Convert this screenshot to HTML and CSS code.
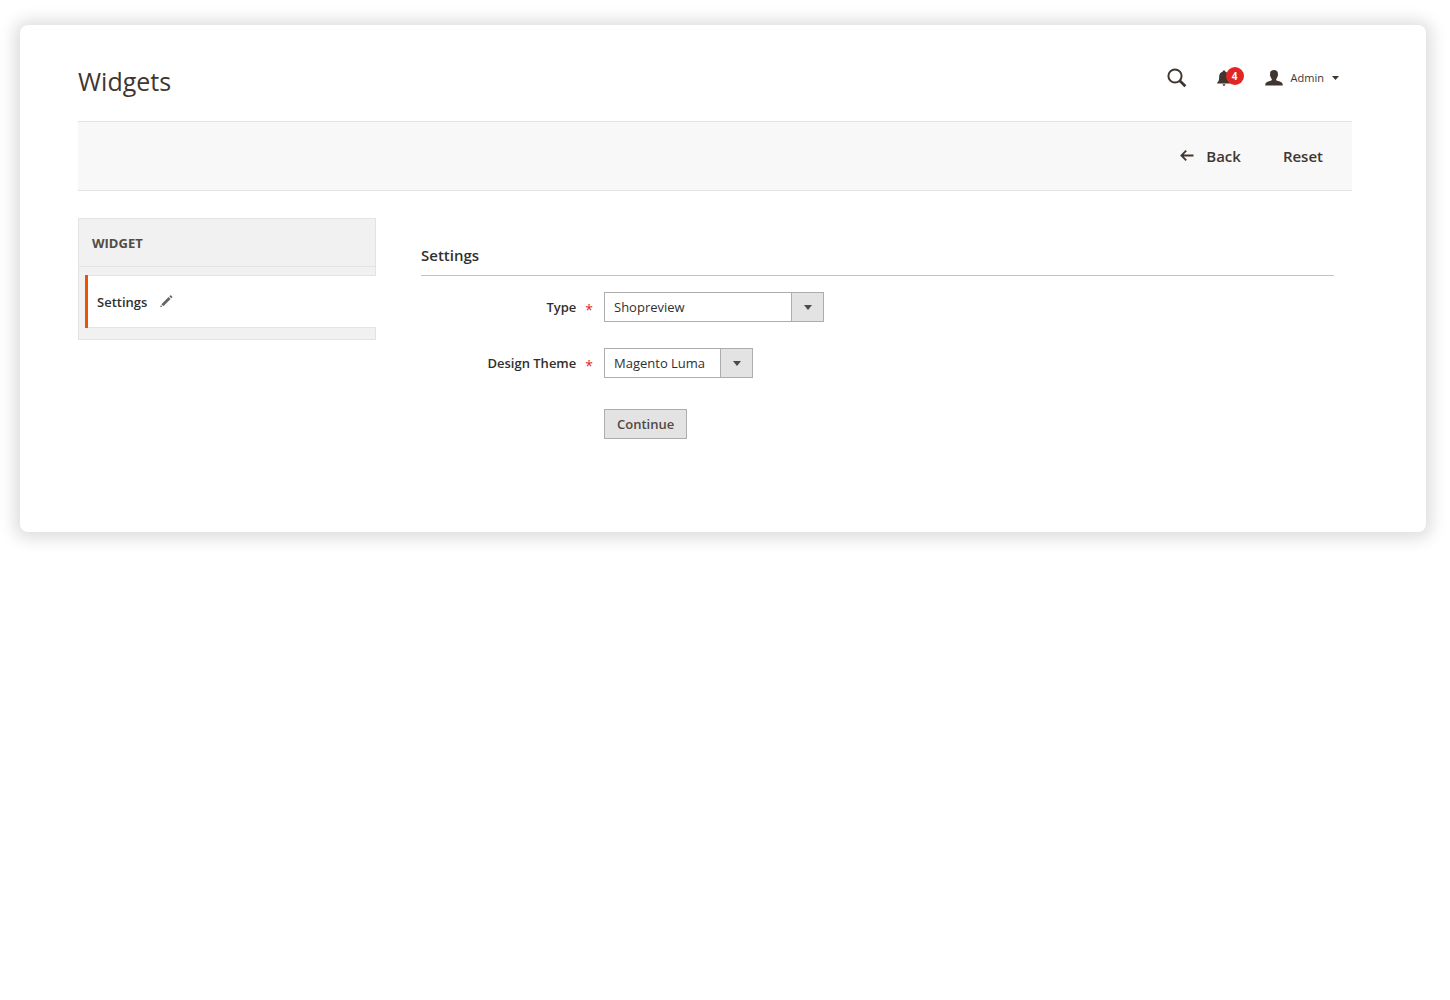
FILE: index.html
```html
<!DOCTYPE html>
<html lang="en">
<head>
    <meta charset="UTF-8">
    <meta name="viewport" content="width=device-width, initial-scale=1.0">
    <title>Widgets</title>
    <link rel="stylesheet" href="styles.css">
</head>
<body>
    <div class="page">
        <header class="header">
            <h1>Widgets</h1>
            <div class="headerTools">
                <button type="button" class="iconButton search" aria-label="Search">
                    <svg width="20" height="20" viewBox="0 0 20 20" fill="none" stroke="currentColor">
                        <circle cx="8" cy="8" r="6.6" stroke-width="2"/>
                        <path d="M12.8 12.8L18.4 18.2" stroke-width="2.8"/>
                    </svg>
                </button>
                <button type="button" class="iconButton notifications" aria-label="Notifications">
                    <svg width="14" height="16" viewBox="0 0 14 16" fill="currentColor">
                        <path d="M7 0.6C7.8 0.6 8.4 1 8.4 1.7C10.9 2.4 11.8 4.2 11.8 6.4C11.8 9.8 12.4 11.6 13.8 12.6V13.6H0.2V12.6C1.6 11.6 2.2 9.8 2.2 6.4C2.2 4.2 3.1 2.4 5.6 1.7C5.6 1 6.2 0.6 7 0.6ZM5.6 14.2H8.4C8.3 15.2 7.8 15.7 7 15.7C6.2 15.7 5.7 15.2 5.6 14.2Z"/>
                    </svg>
                    <span class="badge">4</span>
                </button>
                <button type="button" class="iconButton account">
                    <svg width="18" height="16" viewBox="0 0 18 16" fill="currentColor">
                        <path d="M9 0C11.6 0 13 1.4 12.9 3.8L12.8 4.4C13.4 4.6 13.1 6 12.5 6.4C12.3 7.6 11.8 8.4 11.2 8.9V10C11.5 10.6 12.6 10.8 14.2 11.3C16.8 12.1 17.8 13 17.8 15.6H0.2C0.2 13 1.2 12.1 3.8 11.3C5.4 10.8 6.5 10.6 6.8 10V8.9C6.2 8.4 5.7 7.6 5.5 6.4C4.9 6 4.6 4.6 5.2 4.4L5.1 3.8C5 1.4 6.4 0 9 0Z"/>
                    </svg>
                    <span>Admin</span>
                    <svg class="caret" width="7" height="4" viewBox="0 0 7 4" fill="currentColor">
                        <path d="M0 0H7L3.5 4Z"/>
                    </svg>
                </button>
            </div>
        </header>

        <div class="toolbar">
            <button type="button" class="action">
                <svg width="14" height="12" viewBox="0 0 14 12" fill="none" stroke="currentColor" stroke-width="1.8">
                    <path d="M13.5 5.5H1.5M6.2 0.6L1.4 5.5L6.2 10.4"/>
                </svg>
                Back
            </button>
            <button type="button" class="action">Reset</button>
        </div>

        <div class="columns">
            <nav class="sideNav">
                <h2>Widget</h2>
                <ul>
                    <li class="active">
                        <a href="#settings">
                            Settings
                            <svg width="13" height="13" viewBox="0 0 13 13" fill="currentColor">
                                <path d="M0.2 12.2L0.9 10.1L2.3 11.5ZM1.4 9.2L8.6 2L10.6 4L3.4 11.2ZM9.3 1.3L10.2 0.4Q10.7 0 11.2 0.4L12.2 1.4Q12.6 1.9 12.2 2.4L11.3 3.3Z"/>
                            </svg>
                        </a>
                    </li>
                </ul>
            </nav>

            <main class="content" id="settings">
                <h3>Settings</h3>
                <form>
                    <div class="field">
                        <label for="type">Type</label>
                        <div class="selectBox wide">
                            <select id="type" name="type" required>
                                <option>Shopreview</option>
                            </select>
                        </div>
                    </div>
                    <div class="field">
                        <label for="theme">Design Theme</label>
                        <div class="selectBox">
                            <select id="theme" name="theme" required>
                                <option>Magento Luma</option>
                            </select>
                        </div>
                    </div>
                    <div class="field">
                        <button type="button" class="continue">Continue</button>
                    </div>
                </form>
            </main>
        </div>
    </div>
</body>
</html>
```
FILE: styles.css
```css
* {
    margin: 0;
    padding: 0;
    box-sizing: border-box;
}
body {
    background-color: #fff;
    color: #303030;
    font-family: "Open Sans", "Noto Sans", sans-serif;
    font-size: 13px;
    line-height: 18px;
}
button, select {
    font: inherit;
    color: inherit;
    border: none;
    background: none;
}
button {
    cursor: pointer;
}
svg {
    display: block;
    flex: none;
}
.page {
    margin: 25px 24px 25px 20px;
    padding: 38px 74px 93px 58px;
    border-radius: 8px;
    box-shadow: 0 1px 16px 6px rgba(0, 0, 0, 0.13);
}

/* Header */
.header {
    display: flex;
    justify-content: space-between;
    padding-bottom: 22px;
    color: #41362f;
}
h1 {
    font-size: 25px;
    font-weight: 400;
    line-height: 36px;
}
.headerTools {
    display: flex;
    align-items: center;
    height: 30px;
    padding-right: 13px;
}
.iconButton {
    display: flex;
    align-items: center;
    position: relative;
}
.search {
    margin-right: 30px;
}
.notifications {
    margin-right: 34px;
}
.badge {
    position: absolute;
    left: 9px;
    top: -3px;
    width: 18px;
    height: 18px;
    border-radius: 50%;
    background-color: #e22626;
    color: #fff;
    font-size: 10px;
    font-weight: 700;
}
.account {
    gap: 8px;
    font-size: 11px;
}

/* Toolbar */
.toolbar {
    display: flex;
    justify-content: flex-end;
    align-items: center;
    gap: 42px;
    height: 70px;
    padding-right: 29px;
    border-top: 1px solid #e3e3e3;
    border-bottom: 1px solid #e3e3e3;
    background-color: #f8f8f8;
}
.action {
    display: flex;
    align-items: center;
    gap: 12px;
    color: #41362f;
    font-size: 15px;
    font-weight: 600;
}

/* Columns */
.columns {
    display: flex;
    align-items: flex-start;
    gap: 45px;
    padding-top: 27px;
}
.sideNav {
    width: 298px;
    flex: none;
    padding-bottom: 11px;
    border: 1px solid #e3e3e3;
    background-color: #f1f1f1;
}
.sideNav h2 {
    padding: 15px 13px 14px;
    margin-bottom: 8px;
    border-bottom: 1px solid #e3e3e3;
    color: #524c44;
    font-size: 13px;
    font-weight: 700;
    text-transform: uppercase;
}
.sideNav ul {
    list-style: none;
}
.active {
    margin: 0 -1px 0 6px;
    border-left: 3px solid #eb5202;
}
.active a {
    display: flex;
    align-items: center;
    gap: 13px;
    height: 53px;
    padding-left: 9px;
    border-top: 1px solid #e3e3e3;
    border-bottom: 1px solid #e3e3e3;
    background-color: #fff;
    color: #303030;
    font-weight: 600;
    text-decoration: none;
}
.active svg {
    color: #666;
}
.content {
    flex: 1;
    padding-top: 25px;
    padding-right: 18px;
}
h3 {
    padding-bottom: 8px;
    margin-bottom: 16px;
    border-bottom: 1px solid #cac3b4;
    font-size: 15px;
    font-weight: 600;
    line-height: 24px;
}

/* Form */
.field {
    display: grid;
    grid-template-columns: 183px 1fr;
    align-items: center;
    justify-items: start;
    margin-bottom: 26px;
}
.field label {
    display: flex;
    align-items: center;
    justify-self: end;
    gap: 9px;
    padding-right: 11px;
    font-weight: 600;
}
.field label::after {
    content: "*";
    padding-top: 6px;
    color: #e22626;
    font-size: 14px;
    font-weight: 400;
}
.selectBox {
    display: flex;
    position: relative;
    border: 1px solid #adadad;
}
.wide {
    width: 220px;
}
.selectBox select {
    appearance: none;
    width: 100%;
    height: 28px;
    padding: 0 46px 0 9px;
    border-radius: 0;
}
.selectBox::before {
    content: "";
    position: absolute;
    top: 0;
    right: 0;
    bottom: 0;
    width: 31px;
    border-left: 1px solid #adadad;
    background-color: #e3e3e3;
    pointer-events: none;
}
.selectBox::after {
    content: "";
    position: absolute;
    top: 12px;
    right: 11px;
    border: 4px solid transparent;
    border-top: 5px solid #514943;
    border-bottom: none;
    pointer-events: none;
}
.continue {
    grid-column: 2;
    height: 30px;
    margin-top: 5px;
    padding: 0 12px;
    border: 1px solid #adadad;
    background-color: #e3e3e3;
    color: #514943;
    font-weight: 600;
}
.field:last-child {
    margin-bottom: 0;
}
```
